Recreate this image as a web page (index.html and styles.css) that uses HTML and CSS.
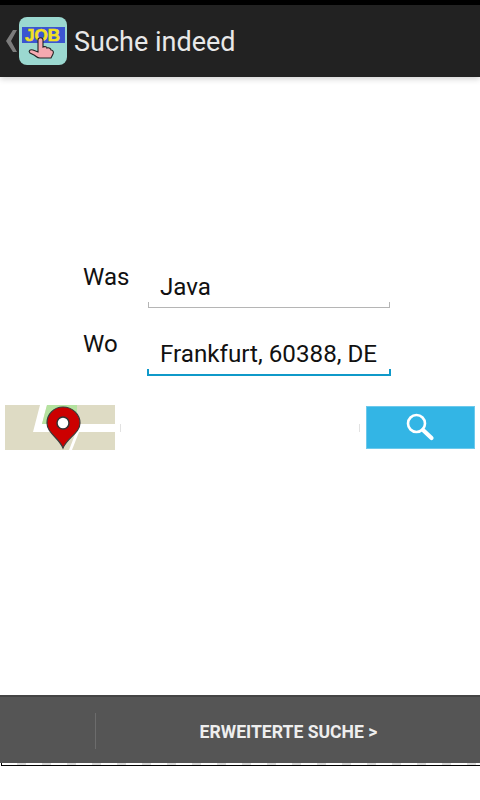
FILE: index.html
```html
<!DOCTYPE html>
<html lang="en">
<head>
    <meta charset="UTF-8">
    <meta name="viewport" content="width=device-width, initial-scale=1.0">
    <title>Suche indeed</title>
    <link rel="stylesheet" href="styles.css">
</head>
<body>
<div class="status-bar"></div>
<div class="action-bar">
    <svg class="back-icon" width="12" height="24" viewBox="0 0 12 24"><path d="M7 1 L0 12 L7 23 L11 23 L5 12 L11 1 Z" fill="#7c7c7c"/></svg>
    <svg class="app-icon" width="48" height="48" viewBox="0 0 48 48">
        <rect width="48" height="48" rx="8" fill="#9bd8d0"/>
        <rect x="3" y="10" width="43" height="16" fill="#3b55d0"/>
        <text x="23.5" y="24" class="app-icon-text" text-anchor="middle">JOB</text>
        <path d="M19 23 C19 20 24 20 24 23 L24 30 C26 29 28 30 28 31 C30 30 32 32 32 33 C34 33 35 35 34 37 L32 41 L21 41 C18 41 17 39 15 38 L11 36 C9 34 11 32 14 33 L19 35 Z" fill="#f4a9b0" stroke="#222" stroke-width="1.1"/>
    </svg>
    <span class="action-title">Suche indeed</span>
</div>
<div class="main">
    <div class="form-row">
        <span class="form-label">Was</span>
        <div class="field">
            <div class="field-text">Java</div>
            <div class="field-line"></div>
        </div>
    </div>
    <div class="form-row">
        <span class="form-label">Wo</span>
        <div class="field">
            <div class="field-text">Frankfurt, 60388, DE</div>
            <div class="field-line field-line-active"></div>
        </div>
    </div>
    <div class="search-row">
        <svg class="map-tile" width="110" height="45" viewBox="0 0 110 45">
            <rect width="110" height="45" fill="#dedbc4"/>
            <path d="M35 0 L28 27 L110 27 L110 19 L37 19 L42 0 Z" fill="#fff"/>
            <path d="M42 0 L37 19 L72 19 L72 0 Z" fill="#b5e2a0"/>
            <path d="M71 27 L64 45 L67 45 L74 27 Z" fill="#fff"/>
            <path d="M58 43 C54 33 42 28 42 18 C42 9 49 2 58 2 C67 2 75 9 75 18 C75 28 62 33 58 43 Z" fill="#cc0000" stroke="#3a3a3a" stroke-width="1.2"/>
            <circle cx="58" cy="18" r="6" fill="#fff" stroke="#333" stroke-width="1.5"/>
        </svg>
        <div class="location-field"></div>
        <div class="search-button">
            <svg width="30" height="30" viewBox="0 0 30 30" fill="none" stroke="#fff">
                <circle cx="10.5" cy="10.5" r="8.5" stroke-width="2.6"/>
                <path d="M17 17 L25.5 25" stroke-width="4.2" stroke-linecap="round"/>
            </svg>
        </div>
    </div>
</div>
<div class="bottom-bar">
    <div class="bottom-left"><span class="bottom-divider"></span></div>
    <div class="bottom-action">ERWEITERTE SUCHE &gt;</div>
</div>
<div class="bottom-dashes"></div>
<div class="bottom-line"></div>
</body>
</html>
```

FILE: styles.css
```css
html, body {
    margin: 0;
    padding: 0;
}
body {
    width: 480px;
    height: 800px;
    overflow: hidden;
    display: flex;
    flex-direction: column;
    background: #fff;
    font-family: Roboto, sans-serif;
}
.status-bar {
    height: 5px;
    background: #000;
}
.action-bar {
    height: 72px;
    background: #222;
    display: flex;
    align-items: center;
    box-shadow: 0 2px 6px rgba(0, 0, 0, 0.18);
}
.back-icon {
    margin-left: 6px;
}
.app-icon {
    margin-left: 1px;
    margin-bottom: 1px;
}
.app-icon-text {
    font-family: "Liberation Sans", sans-serif;
    font-size: 17px;
    font-weight: bold;
    fill: #f2e020;
    stroke: #f2e020;
    stroke-width: 0.6px;
}
.action-title {
    margin-left: 7px;
    padding-top: 2px;
    font-size: 27px;
    color: #e8e8e8;
}
.main {
    flex: 1;
    display: flex;
    flex-direction: column;
    padding-top: 184px;
}
.form-row {
    display: flex;
    height: 67px;
    padding-left: 83px;
}
.form-label {
    width: 65px;
    font-size: 24px;
    line-height: 32px;
    color: #111;
}
.field {
    width: 242px;
}
.field-text {
    padding: 11px 0 0 12px;
    font-size: 24.2px;
    line-height: 30px;
    color: #111;
    white-space: nowrap;
}
.field-line {
    height: 5px;
    border: 1px solid #b5b5b5;
    border-top: 0;
}
.field-line-active {
    height: 5px;
    margin: 0 -1px;
    border: 2px solid #0f99c9;
    border-top: 0;
}
.search-row {
    display: flex;
    align-items: center;
    height: 45px;
    margin-top: 10px;
    padding-left: 5px;
}
.location-field {
    width: 238px;
    height: 8px;
    margin-left: 5px;
    border-left: 1px solid #e2e2e2;
    border-right: 1px solid #e2e2e2;
}
.search-button {
    width: 107px;
    height: 41px;
    margin-left: 6px;
    background: #33b5e5;
    border: 1px solid #6cc9ec;
    display: flex;
    align-items: center;
    justify-content: center;
}
.bottom-bar {
    height: 66px;
    background: #555;
    border-top: 2px solid #444;
    display: flex;
    align-items: center;
}
.bottom-left {
    width: 96px;
    height: 36px;
    margin-top: 2px;
    display: flex;
    justify-content: flex-end;
}
.bottom-divider {
    width: 1px;
    background: #6c6c6c;
}
.bottom-action {
    flex: 1;
    padding-top: 3px;
    padding-left: 1px;
    text-align: center;
    font-size: 17.6px;
    font-weight: bold;
    color: #eee;
}
.bottom-dashes {
    height: 2px;
    margin-left: 1px;
    border-left: 1px solid #000;
    background: repeating-linear-gradient(90deg, #fff 0, #fff 15px, #dcdcdc 15px, #dcdcdc 24px, #fff 24px, #fff 25px);
}
.bottom-line {
    height: 1px;
    margin-left: 1px;
    margin-bottom: 34px;
    background: #000;
}
```
